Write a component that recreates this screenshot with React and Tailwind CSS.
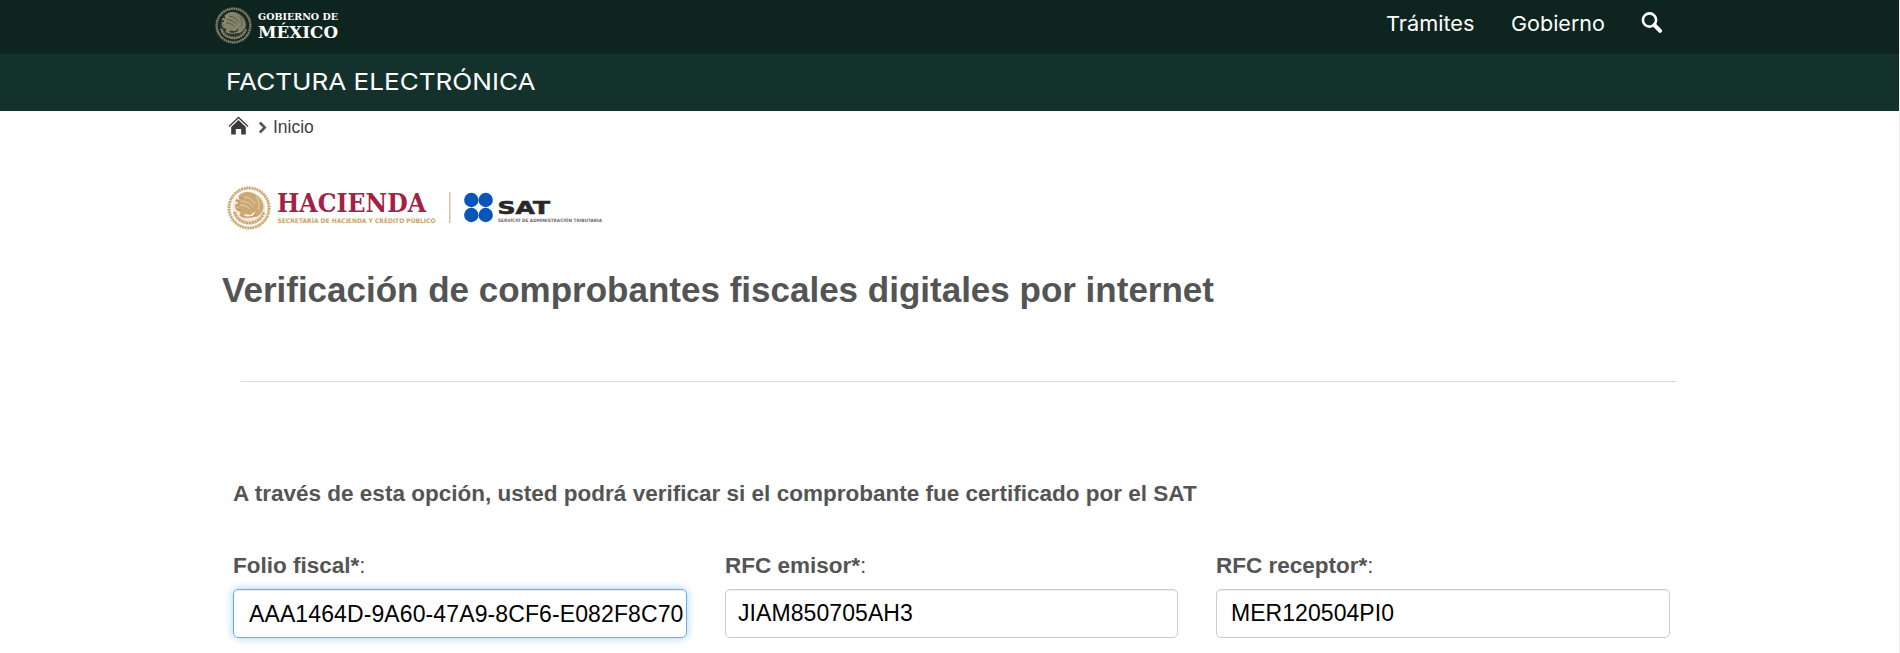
function Seal({ className, color }) {
  return (
    <svg viewBox="0 0 44 44" className={className} fill="none" stroke={color}>
      <circle cx="22" cy="22" r="20" strokeWidth="3.4" strokeDasharray="1.7 0.9" opacity="0.75" />
      <circle cx="22" cy="22" r="20" strokeWidth="1.3" strokeDasharray="3 0.7" opacity="0.75" />
      <circle cx="22" cy="22" r="16.4" fill={color} stroke="none" opacity="0.22" />
      <path d="M7.500 26c1 5.500 6.500 10.800 14.500 11s13.500-5.500 15-11" strokeWidth="3" strokeDasharray="2.200 0.600" opacity="0.9" />
      <path
        d="M13 8.500c5-3.500 11-3 15.500 0 5 3 8.500 8 8 13.500-1 4.500-4 7-7 9l-3-1 2-5-5 4-5-1-3 3-3-1 1-4-5-2 3-2-4-4 4 0-3-5 4 1-1-4z"
        fill={color}
        stroke="none"
        opacity="0.85"
      />
      <path
        d="M17 11c5 0 9 3 11 7m-14-3c5 0 9 2 12 6m-13-2c4 0 7 1 10 4m6-12c3 3 4 8 2 13"
        stroke="currentColor"
        strokeWidth="0.8"
        opacity="0.6"
      />
      <path d="M8.500 15c2-1 3.500 0 3.500 2s-3 2-3 4 3 2 5 4m-2-13c2-1 3 0 4 1m-1 17c3 2 10 2 14-1" strokeWidth="1.700" />
      <path d="M17 32h11m-8-2.500h6" stroke="currentColor" strokeWidth="0.7" opacity="0.7" />
    </svg>
  );
}

function GobiernoLogo() {
  return (
    <svg width="130" height="44" viewBox="0 0 130 44" className="overflow-visible" fontFamily="'DejaVu Serif', serif" fontWeight="bold" fill="#fff">
      <text x="43" y="18.400" fontSize="9.600" textLength="80" lengthAdjust="spacingAndGlyphs">GOBIERNO DE</text>
      <text x="43" y="36" fontSize="16.800" textLength="80" lengthAdjust="spacingAndGlyphs">MÉXICO</text>
    </svg>
  );
}

function HaciendaLogo() {
  return (
    <svg width="460" height="46" viewBox="0 0 460 46" className="overflow-visible">
      <g fontWeight="bold">
        <text x="50" y="27" fontFamily="'DejaVu Serif', serif" fontSize="25.200" fill="#a32145" textLength="149" lengthAdjust="spacingAndGlyphs">HACIENDA</text>
        <text x="50.500" y="37.600" fontFamily="'DejaVu Sans', sans-serif" fontSize="6.300" fill="#cba468" textLength="158" lengthAdjust="spacingAndGlyphs">SECRETARÍA DE HACIENDA Y CRÉDITO PÚBLICO</text>
        <text x="270.500" y="29" fontFamily="'DejaVu Sans', sans-serif" fontSize="17.300" fill="#2b2728" stroke="#2b2728" strokeWidth="0.6" textLength="52.500" lengthAdjust="spacingAndGlyphs">SAT</text>
        <text x="271" y="37.400" fontFamily="'DejaVu Sans', sans-serif" fontSize="4.600" fill="#6e6a68" textLength="104" lengthAdjust="spacingAndGlyphs">SERVICIO DE ADMINISTRACIÓN TRIBUTARIA</text>
      </g>
      <path d="M222.800 7v31" stroke="#dfc193" strokeWidth="1.500" />
      <g fill="#0a55b8">
        <circle cx="244.300" cy="15" r="7.200" />
        <circle cx="258.700" cy="15" r="7.200" />
        <circle cx="244.300" cy="30" r="7.200" />
        <circle cx="258.700" cy="30" r="7.200" />
      </g>
    </svg>
  );
}

const fields = [
  {
    label: 'Folio fiscal*',
    value: 'AAA1464D-9A60-47A9-8CF6-E082F8C70',
    box: 'w-[454px] border-[#66afe9] pl-[15px] pt-[1px] tracking-[0.11px] shadow-[inset_0_1px_1px_rgba(0,0,0,0.075),0_0_8px_rgba(102,175,233,0.6)]',
  },
  {
    label: 'RFC emisor*',
    value: 'JIAM850705AH3',
    box: 'w-[453px] border-[#ccc] pl-[12px] pb-[1px] tracking-[0.08px] shadow-[inset_0_1px_1px_rgba(0,0,0,0.075)]',
  },
  {
    label: 'RFC receptor*',
    value: 'MER120504PI0',
    box: 'w-[454px] border-[#ccc] pl-[14px] pb-[1px] tracking-[0.05px] shadow-[inset_0_1px_1px_rgba(0,0,0,0.075)]',
  },
];

export default function App() {
  return (
    <div className="h-[653px] overflow-hidden border-r border-[#efefef] bg-white font-['Liberation_Sans',Arial,sans-serif] text-[#545454]">
      <header className="flex h-[54px] items-start justify-between bg-[#0e241f] pl-[215px] pr-[236px] font-['Inter',sans-serif] text-white">
        <div className="flex pt-[2px]">
          <div className="-mr-[37px] pt-[5px]">
            <Seal className="size-[37px] text-[#0e241f]" color="#948f73" />
          </div>
          <GobiernoLogo />
        </div>
        <nav className="flex h-[48px] items-center text-[20.5px]">
          <a className="w-[125px] origin-left scale-x-[1.06]">Trámites</a>
          <a className="w-[130px] origin-left scale-x-[1.05]">Gobierno</a>
          <svg width="22" height="24" viewBox="0 0 22 24" fill="none" stroke="#fff" className="-mt-[4px]">
            <circle cx="8.500" cy="10" r="6.600" strokeWidth="2.600" />
            <path d="M13.300 15l5.800 5.800" strokeWidth="4" strokeLinecap="round" />
          </svg>
        </nav>
      </header>
      <div className="flex h-[57px] items-center bg-[#14322c] pb-[2px] pl-[226px]">
        <span className="origin-left scale-x-[1.11] whitespace-nowrap font-['Inter',sans-serif] text-[23.5px] leading-[32px] text-white">
          FACTURA ELECTRÓNICA
        </span>
      </div>
      <nav className="mt-[2px] flex h-[28px] items-center pl-[228px] text-[17.5px] leading-[28px]">
        <svg width="21" height="19" viewBox="0 0 21 19" fill="none" className="-mt-[3px]">
          <path d="M1 10.500L10.500 1.500l9.500 9" stroke="#393c3e" strokeWidth="1.300" />
          <path d="M10.500 4L3.200 11v7.500h4.600v-5.500h5.400v5.500h4.600V11z" fill="#393c3e" />
        </svg>
        <svg width="9" height="13" viewBox="0 0 9 13" fill="none" className="ml-[9px]">
          <path d="M1.800 1.500l5 5-5 5" stroke="#545454" strokeWidth="2.500" />
        </svg>
        <span className="ml-[6px] text-[#404041]">Inicio</span>
      </nav>
      <div className="mt-[44px] flex h-[46px] pl-[227px]">
        <Seal className="-mr-[44px] mt-[1px] size-[44px] text-white" color="#c69c60" />
        <HaciendaLogo />
      </div>
      <h1 className="mt-[39px] whitespace-nowrap pl-[222px] text-[35px] font-bold leading-[40px]">
        Verificación de comprobantes fiscales digitales por internet
      </h1>
      <hr className="ml-[241px] mt-[71px] w-[1436px] border-t border-[#ddd]" />
      <main className="pl-[233px] pt-[96px]">
        <p className="whitespace-nowrap text-[22.5px] font-bold leading-[32px] tracking-[0.01px]">
          A través de esta opción, usted podrá verificar si el comprobante fue certificado por el SAT
        </p>
        <form className="mt-[40px] flex gap-[38px]">
          {fields.map((f) => (
            <div key={f.label}>
              <label className="block text-[22.5px] leading-[32px]">
                <b>{f.label}</b>:
              </label>
              <div className={'mt-[7px] flex h-[49px] items-center overflow-hidden rounded-[5px] border text-[23px] leading-[32px] text-black ' + f.box}>
                {f.value}
              </div>
            </div>
          ))}
        </form>
      </main>
    </div>
  );
}
